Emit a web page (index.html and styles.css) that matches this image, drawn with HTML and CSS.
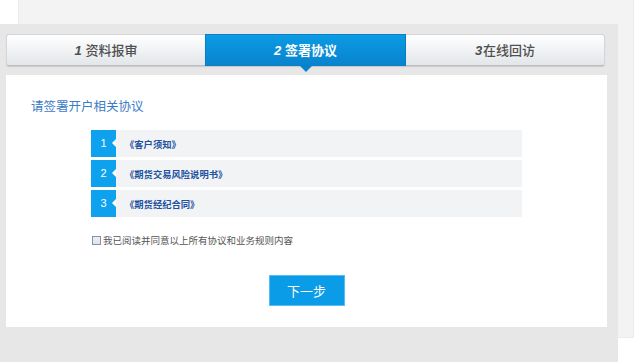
FILE: index.html
```html
<!DOCTYPE html>
<html lang="zh">
<head>
<meta charset="utf-8">
<title>签署协议</title>
<link rel="stylesheet" href="styles.css">
</head>
<body>
<div class="stage">
  <div class="back"></div>
  <div class="front">
    <div class="tabs">
      <div class="tab tab-first"><i>1</i> 资料报审</div>
      <div class="tab tab-active"><i>2</i> 签署协议</div>
      <div class="tab tab-last"><i>3</i>在线回访</div>
    </div>
    <div class="content">
      <h1 class="title">请签署开户相关协议</h1>
      <ul class="docs">
        <li class="doc"><span class="num">1</span><span class="doc-name">《客户须知》</span></li>
        <li class="doc"><span class="num">2</span><span class="doc-name">《期货交易风险说明书》</span></li>
        <li class="doc"><span class="num">3</span><span class="doc-name">《期货经纪合同》</span></li>
      </ul>
      <label class="agree"><span class="box"></span>我已阅读并同意以上所有协议和业务规则内容</label>
      <div class="actions"><button class="next">下一步</button></div>
    </div>
  </div>
</div>
</body>
</html>
```
FILE: styles.css
```css
* { box-sizing: border-box; }
html, body { margin: 0; padding: 0; background: #fff; overflow: hidden; }
body { font-family: "Liberation Sans", "Noto Sans CJK SC", sans-serif; }

.stage { display: grid; width: 636px; height: 362px; }
.back {
  grid-area: 1 / 1;
  margin-left: 18px;
  width: 616px;
  height: 338px;
  background: #f3f3f3;
  border: 1px solid #ececec;
  border-top: none;
}
.front {
  grid-area: 1 / 1;
  margin-top: 24px;
  width: 618px;
  height: 338px;
  background: #e7e7e7;
  padding: 10px 0 0 6px;
}

.tabs { display: flex; height: 32px; }
.tab {
  position: relative;
  height: 32px;
  line-height: 31px;
  text-align: center;
  font-size: 13px;
  font-weight: 500;
  color: #505050;
  background: linear-gradient(#ffffff, #e3e6ea);
  border: 1px solid #d3d5d8;
  border-bottom: 1px solid #b9bcc1;
  box-shadow: 0 1px 1px rgba(0,0,0,0.12);
}
.tab i { font-style: italic; font-weight: bold; }
.tab-first { width: 199px; border-radius: 3px 0 0 3px; border-right: none; }
.tab-last { width: 199px; border-radius: 0 3px 3px 0; border-left: none; }
.tab-last i { margin-right: 1px; }
.tab-active {
  width: 201px;
  color: #fff;
  font-weight: bold;
  background: linear-gradient(#0b9be4, #0884cd);
  border: 1px solid #0a7fc4;
}
.tab-active::after {
  content: "";
  position: absolute;
  left: 50%;
  bottom: -7px;
  margin-left: -6px;
  border-top: 6px solid #0983cb;
  border-left: 6px solid transparent;
  border-right: 6px solid transparent;
}

.content {
  margin-top: 9px;
  width: 601px;
  height: 252px;
  background: #fff;
  padding: 24px 0 0 25px;
}
.title {
  margin: 0;
  font-size: 12.5px;
  line-height: 16px;
  font-weight: normal;
  color: #3b7cc6;
}
.docs {
  list-style: none;
  margin: 15px 0 0 60px;
  padding: 0;
  width: 431px;
  display: flex;
  flex-direction: column;
  gap: 3px;
}
.doc {
  display: flex;
  align-items: center;
  height: 27px;
  background: #f2f3f5;
}
.num {
  position: relative;
  width: 25px;
  height: 27px;
  background: #0ea1ee;
  color: #fff;
  font-size: 11px;
  line-height: 27px;
  text-align: center;
  margin-right: 9px;
}
.num::after {
  content: "";
  position: absolute;
  right: 0;
  top: 9px;
  border-right: 4px solid #fff;
  border-top: 4px solid transparent;
  border-bottom: 4px solid transparent;
}
.doc-name {
  font-size: 9.3px;
  font-weight: bold;
  color: #2050a0;
}

.agree {
  display: flex;
  align-items: center;
  margin: 16px 0 0 60px;
  height: 14px;
  font-size: 9.5px;
  color: #555;
}
.box {
  width: 9px;
  height: 9px;
  border: 1px solid #8294ac;
  background: linear-gradient(#eef0f3, #dfe2e6);
  margin: 0 2px 0 1px;
}
.actions {
  display: flex;
  justify-content: center;
  margin-top: 28px;
  padding-right: 25px;
}
.next {
  width: 76px;
  height: 31px;
  border: 1px solid #55bdf2;
  background: #0b9ce8;
  color: #fff;
  font-family: inherit;
  font-size: 13px;
  padding: 0;
  cursor: pointer;
}
```
